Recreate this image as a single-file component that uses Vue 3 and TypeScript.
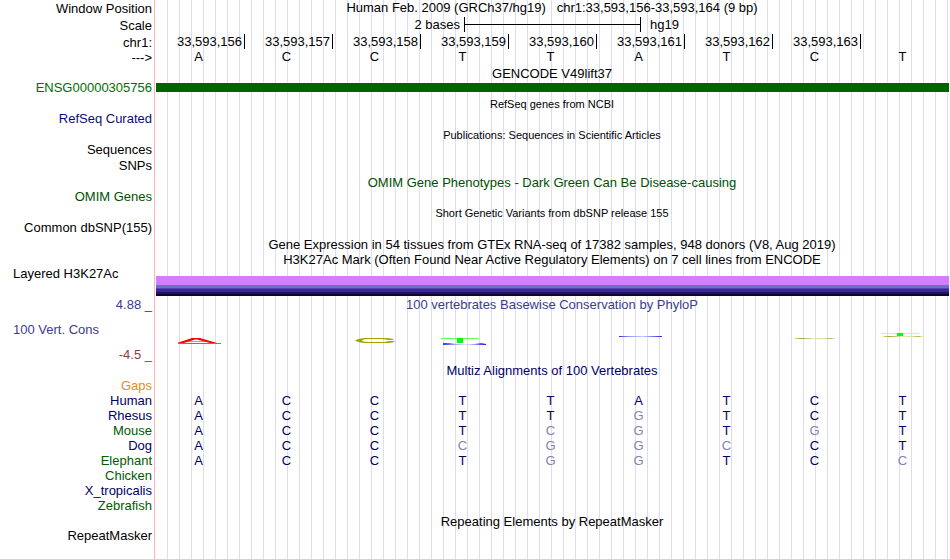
<script setup lang="ts">
type Kind = 'title' | 'small' | 'gene' | 'blank' | 'bases' | 'ruler' | 'scale' | 'signal' | 'logo'

interface Row {
  label: string
  kind: Kind
  text?: string
  tone?: string
  textTone?: string
  size?: string
  bases?: string
  faded?: number[]
}

const positions: string[] = [156, 157, 158, 159, 160, 161, 162, 163].map((n) => `33,593,${n}`)

const rows: Row[] = [
  { label: 'Window Position', kind: 'title', text: 'Human Feb. 2009 (GRCh37/hg19)\u00a0\u00a0 chr1:33,593,156-33,593,164 (9 bp)', size: 'head' },
  { label: 'Scale', kind: 'scale', size: 'head' },
  { label: 'chr1:', kind: 'ruler', size: 'wide' },
  { label: '--->', kind: 'bases', bases: 'ACCTTATCT', size: 'sequence' },
  { label: '', kind: 'title', text: 'GENCODE V49lift37', size: 'wide' },
  { label: 'ENSG00000305756', kind: 'gene', tone: 'gene-green', size: 'raised' },
  { label: '', kind: 'small', text: 'RefSeq genes from NCBI', size: 'wide' },
  { label: 'RefSeq Curated', kind: 'blank', tone: 'navy', size: 'raised' },
  { label: '', kind: 'small', text: 'Publications: Sequences in Scientific Articles', size: 'wide' },
  { label: 'Sequences', kind: 'blank', size: 'raised' },
  { label: 'SNPs', kind: 'blank', size: 'wide' },
  { label: '', kind: 'title', text: 'OMIM Gene Phenotypes - Dark Green Can Be Disease-causing', textTone: 'omim', size: 'wide' },
  { label: 'OMIM Genes', kind: 'blank', tone: 'omim', size: 'raised' },
  { label: '', kind: 'small', text: 'Short Genetic Variants from dbSNP release 155', size: 'wide' },
  { label: 'Common dbSNP(155)', kind: 'blank', size: 'raised' },
  { label: '', kind: 'title', text: 'Gene Expression in 54 tissues from GTEx RNA-seq of 17382 samples, 948 donors (V8, Aug 2019)', size: 'wide' },
  { label: '', kind: 'title', text: 'H3K27Ac Mark (Often Found Near Active Regulatory Elements) on 7 cell lines from ENCODE' },
  { label: 'Layered H3K27Ac', kind: 'signal', size: 'raised' },
  { label: '4.88 _', kind: 'title', text: '100 vertebrates Basewise Conservation by PhyloP', tone: 'indigo', textTone: 'indigo' },
  { label: '100 Vert. Cons', kind: 'logo' },
  { label: '', kind: 'title', text: 'Multiz Alignments of 100 Vertebrates', textTone: 'deep' },
  { label: 'Gaps', kind: 'blank', tone: 'orange' },
  { label: 'Human', kind: 'bases', bases: 'ACCTTATCT', tone: 'deep', textTone: 'deep' },
  { label: 'Rhesus', kind: 'bases', bases: 'ACCTTGTCT', faded: [5], tone: 'deep', textTone: 'deep' },
  { label: 'Mouse', kind: 'bases', bases: 'ACCTCGTGT', faded: [4, 5, 7], tone: 'forest', textTone: 'deep' },
  { label: 'Dog', kind: 'bases', bases: 'ACCCGGCCT', faded: [3, 4, 5, 6], tone: 'deep', textTone: 'deep' },
  { label: 'Elephant', kind: 'bases', bases: 'ACCTGGTCC', faded: [4, 5, 8], tone: 'forest', textTone: 'deep' },
  { label: 'Chicken', kind: 'blank', tone: 'forest' },
  { label: 'X_tropicalis', kind: 'blank', tone: 'deep' },
  { label: 'Zebrafish', kind: 'blank', tone: 'forest' },
  { label: '', kind: 'title', text: 'Repeating Elements by RepeatMasker', size: 'wide' },
  { label: 'RepeatMasker', kind: 'blank', size: 'raised' },
]
</script>

<template>
  <main class="browser">
    <div class="guides"></div>
    <table class="tracks">
      <colgroup>
        <col class="label-col" />
        <col v-for="n in 9" :key="n" />
      </colgroup>
      <tbody>
        <tr v-for="(row, r) in rows" :key="r" :class="[row.kind, row.size]">
          <th v-if="row.kind === 'logo'" scope="row">
            <div class="cons-label">
              <span class="cons-name indigo">{{ row.label }}</span>
              <span class="maroon">-4.5 _</span>
            </div>
          </th>
          <th v-else scope="row" :class="row.tone">{{ row.label }}</th>

          <template v-if="row.kind === 'bases'">
            <td
              v-for="(base, i) in row.bases"
              :key="i"
              class="base"
              :class="[row.textTone, { faded: row.faded?.includes(i) }]"
            >{{ base }}</td>
          </template>

          <template v-else-if="row.kind === 'ruler'">
            <td v-for="i in 9" :key="i" class="position">
              <div :class="{ tick: i > 1 }">{{ positions[i - 1] }}</div>
            </td>
          </template>

          <td v-else-if="row.kind === 'scale'" colspan="9">
            <div class="scale-line">
              <span class="scale-size">2 bases</span>
              <span class="scale-bar"><i></i></span>
              <span class="scale-assembly">hg19</span>
            </div>
          </td>

          <td v-else-if="row.kind === 'gene'" colspan="9"><div class="gene-bar"></div></td>

          <td v-else-if="row.kind === 'signal'" colspan="9"><div class="signal-bar"></div></td>

          <td v-else-if="row.kind === 'logo'" colspan="9">
            <svg class="logos" viewBox="0 0 792 51" preserveAspectRatio="none" aria-hidden="true">
              <defs>
                <linearGradient id="blueFade">
                  <stop offset="0" stop-color="#3030e8" />
                  <stop offset="0.2" stop-color="#8a8aff" />
                  <stop offset="0.55" stop-color="#c8c8ff" />
                  <stop offset="0.8" stop-color="#7070ff" />
                  <stop offset="1" stop-color="#2020d8" />
                </linearGradient>
                <linearGradient id="oliveFade">
                  <stop offset="0" stop-color="#d8d890" />
                  <stop offset="0.15" stop-color="#a8a830" />
                  <stop offset="0.45" stop-color="#e6e6bc" />
                  <stop offset="0.75" stop-color="#dcdca0" />
                  <stop offset="0.88" stop-color="#b4b450" />
                  <stop offset="1" stop-color="#eeeed4" />
                </linearGradient>
              </defs>
              <rect x="22" y="31" width="43" height="1" fill="#6a6aff" />
              <path d="M28 29.5H53" stroke="#ff8080" stroke-width="1" />
              <path d="M21 31 36 26H44L61 31H54L41 27.5H39L28 31Z" fill="#f00" />
              <path
                d="M199 28.500C202 26.500 207 26 212 26H227C233 26 237 26.500 238 28H232C230 27 226 27 222 27H214C208 27 206 27.800 206 28.500S208 30 214 30H222C227 30 231 30 233 29H239C237 31 233 31 227 31H212C207 31 202 30.500 199 28.500Z"
                fill="#a3a300"
              />
              <rect x="285" y="26" width="38" height="1" fill="#60ff60" />
              <rect x="301" y="26" width="6" height="5" fill="#0f0" />
              <path d="M287 31H294L300 32H318L325 31L330 32V33H322L310 32.500L296 33H287Z" fill="url(#blueFade)" />
              <rect x="463" y="24" width="43" height="1" fill="url(#blueFade)" />
              <rect x="639" y="26" width="40" height="1" fill="url(#oliveFade)" />
              <rect x="725" y="21" width="38" height="1" fill="#b4ffb4" />
              <rect x="727" y="24" width="40" height="1" fill="url(#oliveFade)" />
              <rect x="741" y="21" width="6" height="3" fill="#0f0" />
            </svg>
          </td>

          <td v-else colspan="9" class="caption" :class="row.textTone">{{ row.text }}</td>
        </tr>
      </tbody>
    </table>
  </main>
</template>

<style>
body {
  margin: 0;
  background: #fff;
}
</style>

<style scoped>
.browser {
  display: grid;
  grid-template-columns: 154px 2px minmax(0, 1fr);
  min-height: 100vh;
  padding-right: 2px;
  box-sizing: border-box;
  overflow: hidden;
  align-items: start;
  font: 13px/15px "Liberation Sans", Arial, sans-serif;
  color: #000;
}

.guides {
  grid-area: 1 / 2 / 2 / 4;
  align-self: stretch;
  padding-left: 1px;
  border-left: 1px solid #ffb4b4;
  background-image: linear-gradient(to left, #dcdcfa 1px, transparent 1px);
  background-size: calc(100% / 66) 100%;
  background-origin: content-box;
  background-clip: content-box;
}

.tracks {
  grid-area: 1 / 1 / 2 / 4;
  width: 100%;
  table-layout: fixed;
  border-collapse: collapse;
}

.label-col {
  width: 156px;
}

tr {
  height: 15px;
}

tr.wide {
  height: 16px;
  line-height: 16px;
}

tr.head {
  height: 17px;
  line-height: 17px;
}

th,
td {
  padding: 0;
  font-weight: normal;
  white-space: nowrap;
  vertical-align: top;
}

th {
  padding-right: 4px;
  text-align: right;
}

.raised th {
  line-height: 13px;
}

.ruler th {
  line-height: 15px;
  padding-top: 1px;
}

.caption {
  text-align: center;
}

.head .caption {
  line-height: 15px;
}

.title.wide .caption {
  padding-top: 1px;
  line-height: 15px;
}

.small .caption {
  font-size: 11px;
}

.base {
  padding-right: 3px;
  text-align: center;
}

.sequence .base {
  line-height: 13px;
}

.position {
  text-align: right;
}

.position div {
  height: 15px;
  padding-right: 2px;
}

.position .tick {
  border-left: 1px solid #000;
}

.scale-line {
  display: flex;
  height: 15px;
  line-height: 15px;
}

.scale-size {
  flex: 0 0 calc(100% * 7 / 18);
  box-sizing: border-box;
  padding-right: 4px;
  text-align: right;
}

.scale-bar {
  flex: 0 0 calc(100% * 2 / 9 + 1px);
  display: flex;
  align-items: center;
  box-sizing: border-box;
  border: solid #000;
  border-width: 0 1px;
}

.scale-bar i {
  flex: 1;
  height: 1px;
  background: #000;
}

.scale-assembly {
  padding-left: 9px;
}

.gene-bar {
  height: 9px;
  margin: 2px -1px 0 0;
  background: #006400;
}

tr.signal {
  height: 30px;
}

.signal th,
.cons-name {
  padding-left: 13px;
  text-align: left;
}

.signal-bar {
  height: 20px;
  margin: 9px -1px 0 0;
  background: linear-gradient(
    #d27fff 9px,
    #6273c8 9px 12px,
    #6040a8 12px 13px,
    #302ca0 13px 16px,
    #20106c 16px 18px,
    #140428 18px
  );
}

tr.logo {
  height: 51px;
}

.cons-label {
  display: flex;
  flex-direction: column;
  gap: 10px;
  padding-top: 10px;
}

.logos {
  display: block;
  width: 100%;
  height: 51px;
}

.gene-green {
  color: #006e00;
}

.navy {
  color: #0c0c78;
}

.omim {
  color: #005000;
}

.indigo {
  color: #3c3c8c;
}

.maroon {
  color: #8c3c3c;
}

.deep {
  color: #000064;
}

.forest {
  color: #005a00;
}

.orange {
  color: #e68c14;
}

.faded {
  color: #8282b4;
}
</style>
